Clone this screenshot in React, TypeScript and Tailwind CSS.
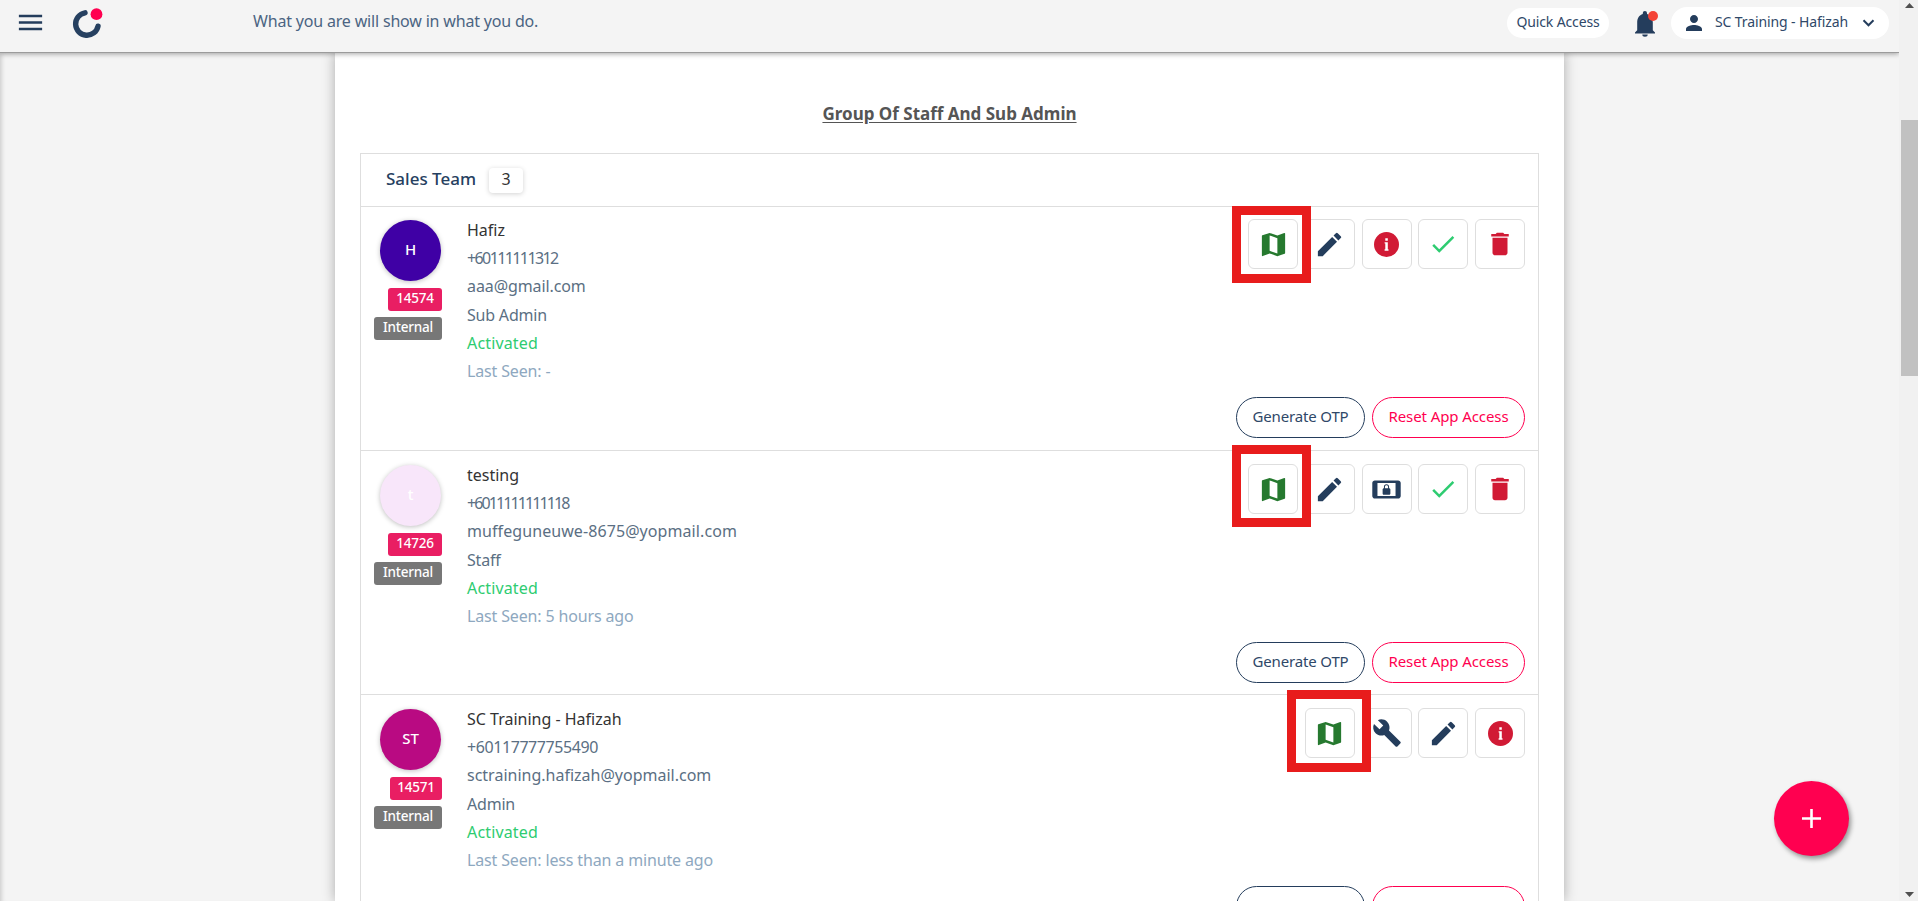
import React, { type ReactNode } from "react";
import { MdBuild, MdCheck, MdDelete, MdEdit, MdMap, MdMenu, MdPerson, MdScreenLockLandscape } from "react-icons/md";

type ActionName = "map" | "edit" | "info" | "lock" | "check" | "delete" | "build";

interface Member {
  initials: string;
  avatar: string;
  id: string;
  idClass: string;
  name: string;
  phone: string;
  phoneClass: string;
  email: string;
  emailClass: string;
  role: string;
  lastSeen: string;
  actions: ActionName[];
  highlight: string;
  offset: string;
}

const members: Member[] = [
  {
    initials: "H",
    avatar: "bg-[#3f00a5]",
    id: "14574",
    idClass: "w-[54px]",
    name: "Hafiz",
    phone: "+60111111312",
    phoneClass: "tracking-[-1.6px]",
    email: "aaa@gmail.com",
    emailClass: "tracking-[-0.1px]",
    role: "Sub Admin",
    lastSeen: "Last Seen: -",
    actions: ["map", "edit", "info", "check", "delete"],
    highlight: "-left-4 -top-[13px] h-[77px] w-[79px]",
    offset: "pt-0",
  },
  {
    initials: "t",
    avatar: "bg-[#f8e6fa]",
    id: "14726",
    idClass: "w-[54px]",
    name: "testing",
    phone: "+6011111111118",
    phoneClass: "tracking-[-1.9px]",
    email: "muffeguneuwe-8675@yopmail.com",
    emailClass: "tracking-[0.08px]",
    role: "Staff",
    lastSeen: "Last Seen: 5 hours ago",
    actions: ["map", "edit", "lock", "check", "delete"],
    highlight: "-left-4 -top-[19px] h-[82px] w-[79px]",
    offset: "pt-px",
  },
  {
    initials: "ST",
    avatar: "bg-[#b90a82]",
    id: "14571",
    idClass: "w-[52px]",
    name: "SC Training - Hafizah",
    phone: "+60117777755490",
    phoneClass: "tracking-[-0.42px]",
    email: "sctraining.hafizah@yopmail.com",
    emailClass: "tracking-normal",
    role: "Admin",
    lastSeen: "Last Seen: less than a minute ago",
    actions: ["map", "build", "edit", "info"],
    highlight: "-left-[18px] -top-[18px] h-[82px] w-[84px]",
    offset: "pt-px",
  },
];

function InfoIcon() {
  return (
    <svg width="25" height="25" viewBox="0 0 25 25">
      <circle cx="12.5" cy="12.5" r="12.5" fill="#d11a35" />
      <path d="M11.3 6.3h2.5v2.4h-2.5zM10.6 10.2h3.2v7.1h.7v1.4h-3.9v-1.4h.7v-5.7h-.7z" fill="#fff" />
    </svg>
  );
}

const icons: Record<ActionName, ReactNode> = {
  map: <MdMap size={31} className="text-[#26792f]" />,
  edit: <MdEdit size={31} className="text-[#243d5c]" />,
  info: <InfoIcon />,
  lock: <MdScreenLockLandscape size={31} className="text-[#243d5c]" />,
  check: <MdCheck size={30} className="text-[#2ecc71]" />,
  delete: <MdDelete size={30} className="text-[#d11a35]" />,
  build: <MdBuild size={30} className="text-[#243d5c]" />,
};

function Logo() {
  return (
    <svg width="34" height="34" viewBox="0 0 34 34" className="-mt-0.5 ml-[25px]">
      <path d="M14 7.800A11.300 11.300 0 1 0 27 21.200" fill="none" stroke="#264060" strokeWidth="5.400" strokeLinecap="round" />
      <circle cx="25.500" cy="9.200" r="5.900" fill="#ff0050" />
    </svg>
  );
}

function Bell() {
  return (
    <svg width="26" height="28" viewBox="0 0 26 28" className="ml-[24px] mt-0.5">
      <path
        d="M9.800 3a2.100 2.100 0 0 1 4.200 0v.900c3.700 1 5.800 4.300 5.800 8.400v8l2.200 2.300v1H2v-1l2.200-2.300v-8c0-4.100 2-7.400 5.600-8.400zM9.300 24.600h5.400a2.700 2.200 0 0 1-5.400 0z"
        fill="#243d5c"
      />
      <circle cx="20" cy="6" r="5" fill="#f44336" />
    </svg>
  );
}

function Header() {
  return (
    <header className="relative z-20 flex h-[52px] w-[1899px] items-start bg-[#f4f4f4] pt-[7px] text-[#2f4868] shadow-[0_1px_0_#9b9b9b,0_2px_5px_rgba(0,0,0,0.35)]">
      <MdMenu size={31} className="ml-[15px] text-[#243d5c]" />
      <Logo />
      <p className="ml-[148px] mt-[2px] whitespace-nowrap leading-6 tracking-[-0.18px] text-[#4b6482]">
        What you are will show in what you do.
      </p>
      <div className="ml-auto mr-[10px] flex items-center">
        <button className="h-[30px] w-[102px] whitespace-nowrap rounded-full bg-white pb-0.5 text-sm tracking-[-0.14px]">
          Quick Access
        </button>
        <Bell />
        <div className="ml-[12px] flex h-8 w-[218px] items-center rounded-full bg-white pl-[11px]">
          <MdPerson size={24} className="text-[#243d5c]" />
          <span className="ml-[9px] w-[134px] whitespace-nowrap pb-[3px] text-sm tracking-[-0.11px]">SC Training - Hafizah</span>
          <svg width="13" height="8" viewBox="0 0 13 8" className="ml-[13px]">
            <path d="M1.500 1.300l5 5 5-5" fill="none" stroke="#243d5c" strokeWidth="2" />
          </svg>
        </div>
      </div>
    </header>
  );
}

function MemberRow({ m }: { m: Member }) {
  return (
    <div className={`flex h-[244px] shrink-0 border-b border-[#dedede] ${m.offset}`}>
      <div className="flex w-[81px] shrink-0 flex-col items-end pt-[13px] text-white">
        <div
          className={`mr-px flex size-[61px] items-center justify-center rounded-full pb-0.5 text-[15px] font-medium shadow-[0_1px_5px_rgba(0,0,0,0.25)] ${m.avatar}`}
        >
          {m.initials}
        </div>
        <span className={`mt-[7px] h-[23px] rounded-[3px] bg-[#e91e63] text-center text-[13.5px] font-medium leading-[21px] tracking-[-0.2px] ${m.idClass}`}>
          {m.id}
        </span>
        <span className="mt-[6px] h-[23px] w-[68px] rounded-[3px] bg-[#777] text-center text-[13.5px] font-medium leading-[21px] tracking-[-0.2px]">
          Internal
        </span>
      </div>
      <div className="ml-[25px] whitespace-nowrap pt-[9px] leading-[28.2px] text-[#5b6f83]">
        <p className="text-[#333]">{m.name}</p>
        <p className={m.phoneClass}>{m.phone}</p>
        <p className={m.emailClass}>{m.email}</p>
        <p className="tracking-[-0.2px]">{m.role}</p>
        <p className="tracking-[0.16px] text-[#2ecc71]">Activated</p>
        <p className="tracking-[-0.15px] text-[#8ea8c0]">{m.lastSeen}</p>
      </div>
      <div className="ml-auto flex flex-col items-end pr-[13px] pt-3">
        <div className="flex gap-[6.7px]">
          {m.actions.map((a) => (
            <div key={a} className="relative">
              <button className="flex size-[50px] items-center justify-center rounded-md border border-[#dedede] bg-white">
                {icons[a]}
              </button>
              {a === "map" && <div className={`absolute z-10 border-[9px] border-[#e81c1c] ${m.highlight}`} />}
            </div>
          ))}
        </div>
        <div className="mt-[128px] flex gap-[7px] whitespace-nowrap text-[15px]">
          <button className="h-[41px] w-[129px] rounded-full border border-[#243d5c] pb-0.5 tracking-[-0.16px] text-[#2f4868]">
            Generate OTP
          </button>
          <button className="h-[41px] w-[153px] rounded-full border border-[#ff0050] pb-0.5 tracking-[-0.09px] text-[#ff0050]">
            Reset App Access
          </button>
        </div>
      </div>
    </div>
  );
}

function Scrollbar() {
  return (
    <div className="flex w-[19px] flex-col items-center bg-[#f1f1f1] pl-0.5">
      <svg width="9" height="5" viewBox="0 0 9 5" className="mt-[3px]">
        <path d="M4.500 0L9 5H0z" fill="#505050" />
      </svg>
      <div className="mt-[112px] h-[256px] w-full bg-[#c1c1c1]" />
      <svg width="9" height="5" viewBox="0 0 9 5" className="mb-1 mt-auto">
        <path d="M4.500 5L9 0H0z" fill="#505050" />
      </svg>
    </div>
  );
}

export default function App() {
  return (
    <div className="flex h-[901px] w-[1918px] overflow-hidden bg-[#f4f4f4] font-['Noto_Sans',sans-serif] text-base">
      <div className="relative flex w-[1899px] flex-col overflow-hidden">
        <Header />
        <main className="flex min-h-0 flex-1 justify-center overflow-hidden shadow-[inset_5px_0_5px_-4px_rgba(0,0,0,0.2)]">
          <section className="flex w-[1229px] flex-col bg-white px-[25px] shadow-[0_0_12px_rgba(0,0,0,0.3)]">
            <h1 className="mt-[50px] h-[51px] shrink-0 text-center text-[17px] font-bold leading-6 text-[#555] underline underline-offset-2">
              Group Of Staff And Sub Admin
            </h1>
            <div className="flex flex-col border border-[#dedede]">
              <div className="flex h-[53px] shrink-0 items-center border-b border-[#dedede] pl-[25px]">
                <span className="w-[91px] whitespace-nowrap pb-0.5 text-[17px] font-medium text-[#264060]">Sales Team</span>
                <span className="ml-3 flex h-[25px] w-[34px] items-center justify-center rounded bg-white pb-0.5 text-[#333] shadow-[0_1px_5px_rgba(0,0,0,0.18)]">
                  3
                </span>
              </div>
              {members.map((m) => (
                <MemberRow key={m.id} m={m} />
              ))}
            </div>
          </section>
        </main>
        <button className="absolute bottom-[45px] right-[50px] flex size-[75px] items-center justify-center rounded-full bg-[#ff0050] shadow-[2px_3px_5px_rgba(0,0,0,0.4)]">
          <svg width="19" height="19" viewBox="0 0 19 19">
            <path d="M9.500 0v19M0 9.500h19" stroke="#fff" strokeWidth="2.600" />
          </svg>
        </button>
      </div>
      <Scrollbar />
    </div>
  );
}
